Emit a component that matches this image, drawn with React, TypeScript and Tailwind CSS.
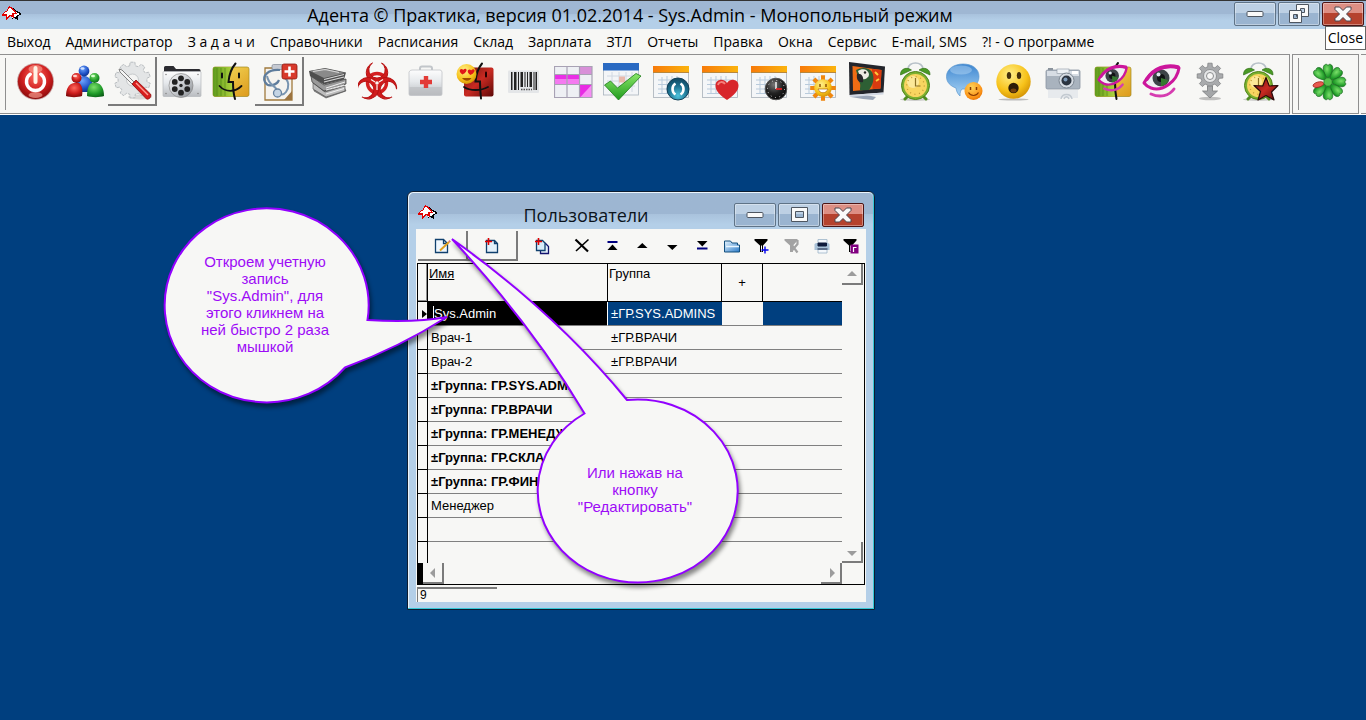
import React from "react";

type IconProps = { children: React.ReactNode };

const Icon = ({ children }: IconProps) => (
  <svg width="40" height="40" viewBox="0 0 40 40" fill="none" aria-hidden="true" className="shrink-0">
    {children}
  </svg>
);

const Defs = () => (
  <svg width="0" height="0" className="absolute" aria-hidden="true">
    <defs>
      <radialGradient id="red" cx=".5" cy=".35" r=".7">
        <stop offset="0" stopColor="#ff6a5e" />
        <stop offset=".55" stopColor="#cf1f1f" />
        <stop offset="1" stopColor="#7d0808" />
      </radialGradient>
      <radialGradient id="blue" cx=".4" cy=".3" r=".8">
        <stop offset="0" stopColor="#6fa5ff" />
        <stop offset=".6" stopColor="#1d4fc4" />
        <stop offset="1" stopColor="#0a2878" />
      </radialGradient>
      <radialGradient id="green" cx=".4" cy=".3" r=".8">
        <stop offset="0" stopColor="#7be06a" />
        <stop offset=".6" stopColor="#1f9a28" />
        <stop offset="1" stopColor="#0a5a14" />
      </radialGradient>
      <radialGradient id="yellow" cx=".4" cy=".3" r=".8">
        <stop offset="0" stopColor="#fff08a" />
        <stop offset=".6" stopColor="#f7c21a" />
        <stop offset="1" stopColor="#c98600" />
      </radialGradient>
      <radialGradient id="orange" cx=".4" cy=".3" r=".8">
        <stop offset="0" stopColor="#ffd35a" />
        <stop offset=".7" stopColor="#fb9216" />
        <stop offset="1" stopColor="#e06a00" />
      </radialGradient>
      <radialGradient id="dark" cx=".4" cy=".3" r=".8">
        <stop offset="0" stopColor="#777" />
        <stop offset=".5" stopColor="#222" />
        <stop offset="1" stopColor="#000" />
      </radialGradient>
      <radialGradient id="teal" cx=".5" cy=".8" r=".9">
        <stop offset="0" stopColor="#4fc3dc" />
        <stop offset=".5" stopColor="#1b6f8e" />
        <stop offset="1" stopColor="#0e3a52" />
      </radialGradient>
      <linearGradient id="silver" x1="0" y1="0" x2="1" y2="1">
        <stop offset="0" stopColor="#fafafa" />
        <stop offset=".5" stopColor="#c9ccd0" />
        <stop offset="1" stopColor="#85898e" />
      </linearGradient>
      <linearGradient id="case" x1="0" y1="0" x2="0" y2="1">
        <stop offset="0" stopColor="#fdfdfd" />
        <stop offset=".45" stopColor="#e6e9ec" />
        <stop offset="1" stopColor="#b9bcc0" />
      </linearGradient>
      <linearGradient id="lime" x1="0" y1="0" x2="1" y2="0">
        <stop offset="0" stopColor="#5f9a1c" />
        <stop offset="1" stopColor="#b4d840" />
      </linearGradient>
      <linearGradient id="gold" x1="0" y1="0" x2="1" y2="1">
        <stop offset="0" stopColor="#f6e060" />
        <stop offset="1" stopColor="#dd9a1c" />
      </linearGradient>
      <linearGradient id="maroon" x1="0" y1="0" x2="1" y2="1">
        <stop offset="0" stopColor="#6a1410" />
        <stop offset=".5" stopColor="#c92a22" />
        <stop offset="1" stopColor="#5c0806" />
      </linearGradient>
      <linearGradient id="header" x1="0" y1="0" x2="1" y2="0">
        <stop offset="0" stopColor="#f77a0a" />
        <stop offset="1" stopColor="#fbb40e" />
      </linearGradient>
      <linearGradient id="check" x1="0" y1="0" x2="0" y2="1">
        <stop offset="0" stopColor="#8be86a" />
        <stop offset="1" stopColor="#1f9a1c" />
      </linearGradient>
      <linearGradient id="bubble" x1="0" y1="0" x2="0" y2="1">
        <stop offset="0" stopColor="#3d86d0" />
        <stop offset="1" stopColor="#a9d4f5" />
      </linearGradient>
      <linearGradient id="folder" x1="0" y1="0" x2="1" y2="1">
        <stop offset="0" stopColor="#e8f6ff" />
        <stop offset="1" stopColor="#2a7ac8" />
      </linearGradient>
    </defs>
  </svg>
);

const gearPoints = (cx: number, cy: number, outer: number, inner: number, teeth: number) => {
  const out: string[] = [];
  for (let i = 0; i < teeth; i++) {
    const a = (i / teeth) * Math.PI * 2 - Math.PI / 2;
    const s = Math.PI / teeth;
    [
      [a - s * 0.62, inner],
      [a - s * 0.42, outer],
      [a + s * 0.42, outer],
      [a + s * 0.62, inner],
    ].forEach(([t, r]) => out.push(`${(cx + Math.cos(t) * r).toFixed(1)},${(cy + Math.sin(t) * r).toFixed(1)}`));
  }
  return out.join(" ");
};

const PowerIcon = () => (
  <Icon>
    <circle cx="20.5" cy="20.5" r="18.5" fill="#c9a0a0" />
    <circle cx="20.5" cy="20.5" r="17.6" fill="url(#red)" />
    <ellipse cx="20.5" cy="8" rx="7" ry="4" fill="#ffb0a0" opacity=".55" />
    <ellipse cx="20.5" cy="34" rx="7" ry="3" fill="#ffb0a0" opacity=".6" />
    <path d="M15.3 13.2a9 9 0 1 0 10.4 0" stroke="#fff" strokeWidth="3.4" strokeLinecap="round" />
    <path d="M20.5 7v14" stroke="#fff3e6" strokeWidth="4" strokeLinecap="round" />
  </Icon>
);

const PeopleIcon = () => (
  <Icon>
    <path d="M10 31c0-9 4-16 10-16s10 7 10 16z" fill="url(#blue)" />
    <circle cx="20" cy="10" r="5.4" fill="url(#blue)" />
    <path d="M2 35c0-8 3-12 8-13h5c3 2 4 6 3 13-4 1.5-12 1.5-16 0z" fill="url(#red)" />
    <circle cx="12.5" cy="17" r="5" fill="url(#red)" />
    <path d="M23 35c0-8 2-12 5-13h5c4 1 7 5 7 13-4 1.5-13 1.5-17 0z" fill="url(#green)" />
    <circle cx="30.5" cy="17" r="5" fill="url(#green)" />
    <ellipse cx="18.5" cy="7.5" rx="2" ry="1.3" fill="#cfe0ff" />
    <ellipse cx="11" cy="15" rx="2" ry="1.2" fill="#ffd2cc" />
    <ellipse cx="29" cy="15" rx="2" ry="1.2" fill="#d4ffcc" />
  </Icon>
);

const ToolsIcon = () => (
  <Icon>
    <ellipse cx="27" cy="36" rx="12" ry="2.5" fill="#ccc" opacity=".7" />
    <polygon points={gearPoints(19.5, 19, 18, 14.5, 10)} fill="#e3e5e6" stroke="#b9bdc0" strokeWidth="1" strokeDasharray="3 1" />
    <circle cx="19.5" cy="19" r="6" fill="#f4f4f3" stroke="#c6c9cb" />
    <path d="M6 8l3 1 14 14-2 2L7 11z" fill="#f5f5f5" stroke="#777" strokeWidth=".9" />
    <path d="M19 23l4-4L37.5 33c1.5 2.5-1.5 6-4 5z" fill="#d81d1d" stroke="#8e0c0c" strokeWidth=".8" />
    <path d="M23 22l12 12" stroke="#ff9d94" strokeWidth="1.4" />
  </Icon>
);

const MovieFolderIcon = () => (
  <Icon>
    <path d="M2 6.5q0-1.5 1.5-1.5h8l2.5 3h23q1.5 0 1.5 1.5V14H2z" fill="#2b2b30" />
    <rect x="1" y="10.5" width="38" height="25" rx="1" fill="url(#case)" stroke="#b4b7bb" strokeWidth=".7" />
    <circle cx="19" cy="24.5" r="12" fill="url(#silver)" stroke="#888" strokeWidth=".7" />
    {[0, 1, 2, 3, 4, 5].map((i) => (
      <circle key={i} cx={19 + Math.sin((i * Math.PI) / 3) * 7.2} cy={24.5 - Math.cos((i * Math.PI) / 3) * 7.2} r="2.9" fill="#222" />
    ))}
    <circle cx="19" cy="24.5" r="1.7" fill="#222" />
    <g fill="#888">
      <circle cx="4" cy="13.5" r=".8" />
      <circle cx="36" cy="13.5" r=".8" />
      <circle cx="4" cy="32.5" r=".8" />
      <circle cx="36" cy="32.5" r=".8" />
    </g>
  </Icon>
);

const FaceBase = () => (
  <>
    <rect x="2" y="6" width="36" height="29.5" rx="2" fill="url(#gold)" stroke="#a08a20" strokeWidth=".7" />
    <path d="M4 6h18c-3 5-4 9-4.5 15H22l1 14.5H4q-2 0-2-2V8q0-2 2-2z" fill="url(#lime)" />
    <path d="M6 7v28M10 7v28M14 7v28" stroke="#4f8414" strokeWidth="1" opacity=".6" />
  </>
);

const FaceIcon = () => (
  <Icon>
    <FaceBase />
    <path d="M24.5 2.5C19 9 18 15 17.5 21H22c0 6 .5 12 2 17" stroke="#111" strokeWidth="2" strokeLinecap="round" />
    <path d="M8.5 25c6 6.5 15.5 6.5 22 0" stroke="#111" strokeWidth="1.8" strokeLinecap="round" />
    <path d="M11 12.5v4M28 12.5v4" stroke="#111" strokeWidth="2" strokeLinecap="round" />
  </Icon>
);

const ClipboardIcon = () => (
  <Icon>
    <path d="M5 7h27v32H5z" fill="#f5f3ef" stroke="#a07a3c" strokeWidth="1.3" />
    <path d="M24 39l8-9v9z" fill="#9c7440" />
    <rect x="12" y="3.5" width="11" height="5" rx="1.5" fill="#c6cad2" stroke="#7f8794" strokeWidth=".7" />
    <path d="M20 9C8 8 2 15 5 21s12 3 14-2" stroke="#5e7c9c" strokeWidth="2.2" />
    <path d="M7 15c2 10 8 9 10 14s6 6 9 2 4-12-3-15" stroke="#7894b0" strokeWidth="2" />
    <circle cx="17.5" cy="32" r="4" fill="#c4d4e4" stroke="#6582a0" strokeWidth="1.3" />
    <rect x="22" y="3" width="15" height="15" rx="2" fill="#d83a2c" stroke="#8e1a12" strokeWidth=".8" />
    <path d="M29.5 5.5v10M24.5 10.5h10" stroke="#fff" strokeWidth="2.6" />
  </Icon>
);

const BooksIcon = () => (
  <Icon>
    <path d="M5 30l12 7 20-7-2-4-18 4-12-5z" fill="#8b8b8b" stroke="#555" strokeWidth=".6" />
    <path d="M4 22l12 9 20-6v5l-19 6L4 28z" fill="#bdbdbd" stroke="#444" strokeWidth=".6" />
    <path d="M2 15l13 9 22-6v5l-22 7L3 21z" fill="#9a9a9a" stroke="#333" strokeWidth=".7" />
    <path d="M17 27l19-6M17 29l18-5M17 33l18-5.5" stroke="#f0f0f0" strokeWidth="1" />
    <path d="M0 10L16 7l21 4.5-2 7-20 5L1 15z" fill="#4e4e4e" />
    <path d="M1 10l15-2.5L36 12l-21 5z" fill="#8a8a8a" />
    <path d="M4 10.5l12-2 14 3M15 18.5l20-5M15 21l20-5" stroke="#d8d8d8" strokeWidth="1.2" />
  </Icon>
);

const BiohazardIcon = () => (
  <Icon>
    <circle cx="19" cy="22" r="9.5" stroke="#d42020" strokeWidth="3.4" />
    {[0, 120, 240].map((a) => (
      <path
        key={a}
        d="M14.5 2A10.7 10.7 0 1 0 23.5 2A8.2 8.2 0 1 1 14.5 2z"
        fill="#d01c1c"
        stroke="#b81414"
        strokeWidth="1"
        transform={`rotate(${a} 19 22)`}
      />
    ))}
    <circle cx="19" cy="22" r="4" fill="#d01c1c" />
    <circle cx="19" cy="22" r="1.8" fill="#f7f7f5" />
    <path d="M19 24v5M17 21l-4-2.5M21 21l4-2.5" stroke="#f7f7f5" strokeWidth="1.2" />
  </Icon>
);

const MedkitIcon = () => (
  <Icon>
    <path d="M13 11V7.5q0-2 2-2h8q2 0 2 2V11" stroke="#c2c6ca" strokeWidth="2" />
    <path d="M5 9h28q1.5 0 2 2v22q0 1.5-1.5 1.5h-30Q2 34.5 2 33V11q1-2 3-2z" fill="url(#case)" stroke="#c1c4c8" strokeWidth=".8" />
    <path d="M2.5 26h32v7q0 1-1 1h-30q-1 0-1-1z" fill="#b9bbbe" opacity=".6" />
    <path d="M19 15v12M13 21h12" stroke="#e23a36" strokeWidth="4.4" />
  </Icon>
);

const LoveFaceIcon = () => (
  <Icon>
    <rect x="8" y="6.5" width="29.5" height="29" rx="2" fill="url(#maroon)" />
    <path d="M26 2.5c-5 6-6 12-6.5 18H24c0 6 .5 12 1 17" stroke="#111" strokeWidth="2" strokeLinecap="round" />
    <path d="M8 26c6 4 17 4 24 0" stroke="#111" strokeWidth="1.8" strokeLinecap="round" />
    <path d="M30 11.5v4" stroke="#200" strokeWidth="2" strokeLinecap="round" />
    <circle cx="10.5" cy="13" r="10" fill="url(#yellow)" />
    <path d="M6.5 13.5c-4-2.5-3-5.5-1-5.5 1.5 0 1.5 1 1.5 1s1.5-2 3-1 0 4-3.5 5.5zM14.5 14c-4-2.5-3-5.5-1-5.5 1.5 0 1.5 1 1.5 1s1.5-2 3-1 0 4-3.5 5.5z" fill="#e01818" />
    <path d="M6 17c3 4 8 3 9.5 0z" fill="#a04c00" />
  </Icon>
);

const BarcodeIcon = () => (
  <Icon>
    <rect x="3" y="9.5" width="31" height="22.5" rx="1" fill="#e4e6e8" />
    <path
      d="M6 11h1.5v18H6zM9 11h2.5v18H9zM13 11h1v18h-1zM15.5 11h2.5v15h-2.5zM19.5 11h1v15h-1zM22 11h1v15h-1zM24.5 11h2.5v15h-2.5zM28.5 11h1v18h-1zM30.5 11h1.5v18h-1.5z"
      fill="#222"
    />
    <path d="M16 28.5h11" stroke="#555" strokeWidth="1.5" strokeDasharray="1.5 1" />
  </Icon>
);

const GridIcon = () => (
  <Icon>
    <rect x=".5" y="5" width="37.5" height="31.5" fill="#eef0f4" />
    <rect x="25.5" y="5" width="12.5" height="8.5" fill="#d890d8" />
    <rect x="1" y="14" width="24.5" height="9.5" fill="#ea2fe6" />
    <rect x="1" y="18" width="24.5" height="5" fill="#f47af0" />
    <rect x="25.5" y="23.5" width="12.5" height="13" fill="#e82be4" />
    <path d="M26 36.5l12-13v13z" fill="#f78cf4" />
    <path d="M.5 5.5h37.5v31H.5zM13 5v31.5M25.5 5v31.5M.5 13.5H38M.5 23.5H38" stroke="#a8a2b4" strokeWidth="1.2" />
  </Icon>
);

const CheckCalendarIcon = () => (
  <Icon>
    <rect x=".5" y="3" width="35" height="31" fill="#f3f5f7" stroke="#aab4be" strokeWidth=".8" />
    <rect x="0" y="2" width="36" height="7.5" fill="#2a6ac2" />
    <path d="M4 15h28M4 20h28M4 25h28M9 11v20M16 11v20M23 11v20M29 11v20" stroke="#d0d8e2" strokeWidth="1" />
    <rect x="16" y="15.5" width="6" height="6" fill="#e9b9ac" />
    <path d="M1.5 24l6-4 7 7L33 12.5l5 2.5L15.5 39z" fill="url(#check)" stroke="#1c7a18" strokeWidth=".8" />
  </Icon>
);

const CalendarBase = () => (
  <>
    <rect x="1.5" y="6" width="35" height="30.5" fill="#f4f6f8" stroke="#a9b0b8" strokeWidth=".8" />
    <rect x="1" y="5" width="36" height="7" fill="url(#header)" />
    <path d="M1 11.5h36" stroke="#b8873c" strokeWidth="1" />
    <path d="M6 19h26M6 23.5h26M6 28h26M6 32.5h26M10 16v16.5M15 15v17.5M20 15v17.5M25 15v17.5" stroke="#b9cbdc" strokeWidth="1" />
  </>
);

const SyncCalendarIcon = () => (
  <Icon>
    <CalendarBase />
    <circle cx="26" cy="28" r="11" fill="url(#teal)" stroke="#124058" />
    <path d="M23.5 22.5c-4 2.5-4 8.5 0 11M28.5 22.5c4 2.5 4 8.5 0 11" stroke="#fff" strokeWidth="2.6" />
  </Icon>
);

const HeartCalendarIcon = () => (
  <Icon>
    <CalendarBase />
    <path d="M26 39C19 34 14.5 30 14.5 24.5c0-6 8-8 11.5-2.5 3.5-5.5 11.5-3.5 11.5 2.5C37.5 30 33 34 26 39z" fill="#d8262b" />
    <path d="M17 24c.5-3.5 5-4 7-1" stroke="#f4807c" strokeWidth="1.8" />
  </Icon>
);

const ClockCalendarIcon = () => (
  <Icon>
    <CalendarBase />
    <circle cx="26" cy="28" r="10.8" fill="url(#dark)" stroke="#555" />
    <circle cx="26" cy="28" r="8.5" stroke="#ddd" strokeWidth="1" strokeDasharray="1 3.45" />
    <path d="M26 28v-7" stroke="#fff" strokeWidth="1.4" />
    <path d="M26 28h6" stroke="#e22" strokeWidth="1.6" />
  </Icon>
);

const SunCalendarIcon = () => (
  <Icon>
    <CalendarBase />
    <polygon points={gearPoints(24, 27, 13, 8, 8)} fill="#f0870f" />
    <circle cx="24" cy="27" r="8.8" fill="url(#yellow)" />
    <path d="M21 23v3M27 23v3" stroke="#8a4a00" strokeWidth="1.4" />
    <path d="M19 28c2 5 8 5 10 0z" fill="#fff" stroke="#b06a00" strokeWidth=".7" />
  </Icon>
);

const TvIcon = () => (
  <Icon>
    <path d="M3 33l15 1 10 2-3 3-10-1-12-2z" fill="#9aa5b6" />
    <path d="M1 1l36 4.5-1.5 26L1.5 34z" fill="#23252b" />
    <path d="M4.5 5l29 4-1 18.5L5 30z" fill="#ef6c14" />
    <path d="M24 8l9.5 1-1 18.5-8 .5z" fill="#d93a10" />
    <path d="M8 9c5-3 13-3 16 2 3 6 1 13-3 18l-9 .5c0-4 1-6-1-9z" fill="#2d5f34" />
    <path d="M10 10c4-3 10-2 11 3 0 4-4 6-8 5z" fill="#ecebe4" />
    <path d="M9 13c4-1 7 2 6 8-4 1-7-2-6-8z" fill="#26262a" />
    <circle cx="17" cy="11.5" r="1.2" fill="#222" />
    <path d="M27 11l3 3M28 20l3-2" stroke="#ffc93a" strokeWidth="2" />
    <path d="M1.5 34l34-2.5v2L2 36z" fill="#d3d9e4" />
  </Icon>
);

const AlarmBase = () => (
  <>
    <ellipse cx="18" cy="38.5" rx="15" ry="1.5" fill="#bbb" opacity=".7" />
    <path d="M11 8C11 0 26 0 26 8" stroke="#b7c0c8" strokeWidth="1.6" />
    <path d="M3.5 14C3 7.5 10 5.5 14.5 9zM33 14c.5-6.5-6.5-8.5-11-5z" fill="#4a9a26" stroke="#2c6a12" strokeWidth=".6" />
    <path d="M10 36l-2 2M27 36l2 2" stroke="#4f8c20" strokeWidth="3" strokeLinecap="round" />
    <circle cx="18.5" cy="24.5" r="14" fill="#7cb030" stroke="#4f8418" strokeWidth="1" />
    <circle cx="18.5" cy="24.5" r="11.5" fill="#f8d560" />
    <circle cx="16" cy="21" r="6" fill="#fdf0b0" opacity=".7" />
    <circle cx="18.5" cy="24.5" r="8.8" stroke="#c09a34" strokeWidth="1.3" strokeDasharray="1 3.6" />
    <path d="M18.5 17v8h5" stroke="#8a7024" strokeWidth="1.2" />
  </>
);

const AlarmIcon = () => (
  <Icon>
    <AlarmBase />
  </Icon>
);

const ChatIcon = () => (
  <Icon>
    <path d="M17 3C8 3 .5 8 .5 15.5c0 6 4 9.5 9.5 11.5.5 3 1 5 4 8 0-4 .5-5 2-7 10 1 17-4.5 17-12.5S26 3 17 3z" fill="url(#bubble)" stroke="#5a97cf" strokeWidth=".7" />
    <ellipse cx="15" cy="9" rx="11" ry="4.5" fill="#d8efff" opacity=".35" />
    <circle cx="27.5" cy="30" r="9" fill="url(#orange)" />
    <path d="M24.5 26v3M30.5 26v3" stroke="#8a3a00" strokeWidth="1.5" />
    <path d="M22.5 31.5c2.5 4 7.5 4 10 0" stroke="#8a3a00" strokeWidth="1.2" />
  </Icon>
);

const SurprisedIcon = () => (
  <Icon>
    <ellipse cx="18.5" cy="38.5" rx="15" ry="1" fill="#bbb" />
    <circle cx="18.5" cy="20.5" r="17.2" fill="url(#yellow)" />
    <ellipse cx="14" cy="14.5" rx="2.2" ry="3.6" fill="#43300c" />
    <ellipse cx="24" cy="14.5" rx="2.2" ry="3.6" fill="#43300c" />
    <circle cx="18.5" cy="27" r="5.2" fill="#2c1c08" />
    <ellipse cx="18.5" cy="29.5" rx="3" ry="2" fill="#75420e" />
  </Icon>
);

const CameraIcon = () => (
  <Icon>
    <path d="M4 29h30v8H4z" fill="#dfe4e9" opacity=".7" />
    <path d="M17 38c1-6 10-6 11 0M20 38c1-3 4-3 5 0" stroke="#c3cad1" strokeWidth="1.5" />
    <rect x="4" y="7" width="5" height="3" fill="#8b939c" />
    <rect x="2" y="9" width="34" height="19" rx="1.5" fill="#a9b3be" stroke="#8c96a1" strokeWidth=".8" />
    <path d="M3 10h32v5H3z" fill="#d7dde4" />
    <rect x="13" y="8" width="12" height="4.5" fill="#edf1f5" stroke="#8c96a1" strokeWidth=".6" />
    <rect x="28" y="10" width="6" height="3" fill="#fff" />
    <circle cx="22.5" cy="19.5" r="7.5" fill="#d5dbe2" stroke="#7d8792" />
    <circle cx="22.5" cy="19.5" r="5" fill="#2b3440" />
    <circle cx="21.5" cy="18.5" r="2" fill="#7d9ab8" />
  </Icon>
);

const EyeShape = () => (
  <>
    <path d="M2 21C8 10 22 2 37 6 35 20 20 30 9 26c-3-1-5-2.5-7-5z" fill="#eef0f2" />
    <circle cx="19" cy="16" r="8.5" fill="#3d4448" />
    <circle cx="19" cy="16" r="4" fill="#101214" />
    <path d="M19 16l7 2c-1 4-4 6-7 6z" fill="#357a30" />
    <circle cx="16.5" cy="12.5" r="2" fill="#dfe8f0" />
    <path d="M2 21C8 9 22 2 37 6 35 20 20 30 9 26c-3-1-5-2.5-7-5z" stroke="#cc169c" strokeWidth="3" strokeLinejoin="round" />
    <path d="M5 17C12 6 24 2 36 5" stroke="#cc169c" strokeWidth="3.6" strokeLinecap="round" />
    <path d="M9 32c9 4 18 2 23-5" stroke="#d63cb0" strokeWidth="3" strokeLinecap="round" />
  </>
);

const EyeFaceIcon = () => (
  <Icon>
    <FaceBase />
    <path d="M25 2c-5 6-6 12-6.5 18H22c0 7 .5 13 1.5 18" stroke="#111" strokeWidth="2" strokeLinecap="round" />
    <g transform="translate(4 2) scale(.8)">
      <EyeShape />
    </g>
  </Icon>
);

const EyeIcon = () => (
  <Icon>
    <g transform="translate(0 1)">
      <EyeShape />
    </g>
  </Icon>
);

const GearArrowIcon = () => (
  <Icon>
    <ellipse cx="19" cy="37.5" rx="11" ry="1.8" fill="#999" opacity=".6" />
    <polygon points={gearPoints(19, 15, 13, 9.5, 8)} fill="#a9abad" stroke="#808284" strokeWidth=".8" />
    <circle cx="19" cy="15" r="6.5" fill="#e6e7e8" stroke="#909294" />
    <circle cx="19" cy="15" r="3.5" fill="#f7f7f6" stroke="#8a8c8e" />
    <path d="M16.5 25h5v5h5L19 37l-7.5-7h5z" fill="#a4a6a8" stroke="#7b7d7f" strokeWidth=".8" />
  </Icon>
);

const StarAlarmIcon = () => (
  <Icon>
    <AlarmBase />
    <path d="M26 16.5l3.3 8.5 8.7-.5-6.5 6.5 2.5 8-8-4.5-8 4.5 2.5-8.5-6.5-6 8.7.5z" fill="url(#maroon)" stroke="#2a0a0a" strokeWidth="1.2" strokeLinejoin="round" />
  </Icon>
);

const FlowerIcon = () => (
  <Icon>
    {[0, 45, 90, 135, 180, 225, 315].map((a) => (
      <path
        key={a}
        d="M20 18C16 12 14.5 8 15.5 4.500 16.500 2 19 1.500 20 3.500 21 1.500 23.500 2 24.500 4.500 25.500 8 24 12 20 18z"
        fill="url(#green)"
        stroke="#17681c"
        strokeWidth=".7"
        transform={`rotate(${a} 20 20)`}
      />
    ))}
    <ellipse cx="20" cy="10" rx="2.6" ry="5.5" fill="#e85a50" stroke="#9a1f18" strokeWidth=".7" transform="rotate(255 20 20)" />
    <circle cx="20" cy="20" r="4.2" fill="#57c24c" stroke="#1c7420" strokeWidth=".7" />
  </Icon>
);

const LogoIcon = () => (
  <svg width="20" height="15" viewBox="0 0 20 15" fill="none" aria-hidden="true" className="shrink-0" shapeRendering="crispEdges">
    <path d="M11 2l3 3 5 3-4 2v3l-3-2-2 2" fill="#fff" stroke="#000" strokeWidth="1.2" />
    <path d="M5 5l2-4 3 1 4 5-3 1v3l-3-2-3 4-1-4-4 0 3-3z" fill="#fff" stroke="#e00000" strokeWidth="1.3" />
  </svg>
);

const topTools: { name: string; icon: React.ReactNode; raised?: boolean }[] = [
  { name: "Выход", icon: <PowerIcon /> },
  { name: "Пользователи", icon: <PeopleIcon /> },
  { name: "Настройки", icon: <ToolsIcon />, raised: true },
  { name: "Медиа", icon: <MovieFolderIcon /> },
  { name: "Пациенты", icon: <FaceIcon /> },
  { name: "Карта", icon: <ClipboardIcon />, raised: true },
  { name: "Справочники", icon: <BooksIcon /> },
  { name: "Диагнозы", icon: <BiohazardIcon /> },
  { name: "Аптечка", icon: <MedkitIcon /> },
  { name: "Лояльность", icon: <LoveFaceIcon /> },
  { name: "Штрих-код", icon: <BarcodeIcon /> },
  { name: "Расписание", icon: <GridIcon /> },
  { name: "Задачи", icon: <CheckCalendarIcon /> },
  { name: "Обновить", icon: <SyncCalendarIcon /> },
  { name: "Избранное", icon: <HeartCalendarIcon /> },
  { name: "Время", icon: <ClockCalendarIcon /> },
  { name: "Выходные", icon: <SunCalendarIcon /> },
  { name: "Экран", icon: <TvIcon /> },
  { name: "Будильник", icon: <AlarmIcon /> },
  { name: "Сообщения", icon: <ChatIcon /> },
  { name: "Жалобы", icon: <SurprisedIcon /> },
  { name: "Снимки", icon: <CameraIcon /> },
  { name: "Просмотр пациента", icon: <EyeFaceIcon /> },
  { name: "Просмотр", icon: <EyeIcon /> },
  { name: "Сервис", icon: <GearArrowIcon /> },
  { name: "Напоминания", icon: <StarAlarmIcon /> },
];

const menu = [
  "Выход",
  "Администратор",
  "З а д а ч и",
  "Справочники",
  "Расписания",
  "Склад",
  "Зарплата",
  "ЗТЛ",
  "Отчеты",
  "Правка",
  "Окна",
  "Сервис",
  "E-mail, SMS",
  "?! - О программе",
];

const captionBase = "flex h-6 w-[42px] items-center justify-center rounded-[2px] border shadow-[inset_0_0_0_1px_rgba(255,255,255,0.35)]";
const captionPlain = "border-[#5f7387] bg-linear-to-b from-[#bdd0e4] from-45% to-[#9ab4d0] to-45%";
const captionClose = "border-[#4c1414] bg-linear-to-b from-[#dd8f84] from-45% to-[#b5422e] to-45%";

const CaptionButtons = ({ restored }: { restored?: boolean }) => (
  <div className="flex gap-0.5">
    <button aria-label="Свернуть" className={`${captionBase} ${captionPlain}`}>
      <svg width="18" height="8" viewBox="0 0 18 8" aria-hidden="true">
        <rect x="1" y="1.5" width="16" height="5" rx="1" fill="#fafafa" stroke="#4e5661" />
      </svg>
    </button>
    <button aria-label="Развернуть" className={`${captionBase} ${captionPlain}`}>
      {restored ? (
        <svg width="22" height="20" viewBox="0 0 22 20" fillRule="evenodd" aria-hidden="true">
          <path d="M8.5 .5h12v12h-12zM12.5 4.5v4h4v-4z" fill="#fafafa" stroke="#4e5661" />
          <path d="M1.5 6.5h12v12h-12zM5.5 10.5v4h4v-4z" fill="#fafafa" stroke="#4e5661" />
        </svg>
      ) : (
        <svg width="17" height="16" viewBox="0 0 17 16" fillRule="evenodd" aria-hidden="true">
          <path d="M.5 .5h16v14H.5zM4.5 4.5v6h8v-6z" fill="#fafafa" stroke="#4e5661" />
        </svg>
      )}
    </button>
    <button aria-label="Закрыть" className={`${captionBase} ${captionClose}`}>
      <svg width="18" height="16" viewBox="0 0 18 16" aria-hidden="true">
        <path d="M1 1h4.5L9 4.5 12.5 1H17v2.5L12.5 8l4.5 4.5V15h-4.5L9 11.5 5.5 15H1v-2.5L5.5 8 1 3.5z" fill="#fafafa" stroke="#4a4650" />
      </svg>
    </button>
  </div>
);

const Small = ({ children }: { children: React.ReactNode }) => (
  <svg width="18" height="18" viewBox="0 0 18 18" fill="none" aria-hidden="true" className="shrink-0">
    {children}
  </svg>
);

const Funnel = ({ color }: { color: string }) => <path d="M1.5 2h13v1.5L10 8.5V15H7V8.5L1.5 3.5z" fill={color} />;

const gridTools: { name: string; icon: React.ReactNode; wide?: boolean; raised?: boolean }[] = [
  {
    name: "Редактировать",
    wide: true,
    raised: true,
    icon: (
      <Small>
        <path d="M2.5 2.5h8l4 4v9h-12zM10.5 2.5v4h4" fill="#f0f8ff" stroke="#10406e" strokeWidth="1.3" />
        <path d="M7 13.5L16 5" stroke="#e0a020" strokeWidth="2" />
        <path d="M16 5l1.2-1.2" stroke="#d87878" strokeWidth="2" />
      </Small>
    ),
  },
  {
    name: "Добавить",
    wide: true,
    raised: true,
    icon: (
      <Small>
        <path d="M3.5 3.5h8l3 3v9h-11zM11.5 3.5v3h3" fill="#e4f1fb" stroke="#10406e" strokeWidth="1.3" />
        <path d="M5.5 1v7M2 4.5h7" stroke="#e00000" strokeWidth="1.6" />
      </Small>
    ),
  },
  {
    name: "Копировать",
    wide: true,
    icon: (
      <Small>
        <path d="M7.5 6.5h5l3 3v7h-8z" fill="#e4f1fb" stroke="#12126e" strokeWidth="1.3" />
        <path d="M3.5 3.5h6l2.5 2.5v7.5h-8.5z" fill="#d8ecfa" stroke="#10406e" strokeWidth="1.3" />
        <path d="M5.5 1v7M2 4.5h7" stroke="#e00000" strokeWidth="1.6" />
      </Small>
    ),
  },
  {
    name: "Удалить",
    icon: (
      <Small>
        <path d="M2.5 2.5l12.5 12" stroke="#000" strokeWidth="2.2" />
        <path d="M15.5 2.5L3 14" stroke="#000" strokeWidth="1.6" />
      </Small>
    ),
  },
  {
    name: "Первая запись",
    icon: (
      <Small>
        <path d="M4.5 5h10" stroke="#000080" strokeWidth="2" />
        <path d="M4.5 13h10l-5-5.5z" fill="#000" />
      </Small>
    ),
  },
  {
    name: "Предыдущая запись",
    icon: (
      <Small>
        <path d="M4 11h10.5L9.3 6z" fill="#000" />
      </Small>
    ),
  },
  {
    name: "Следующая запись",
    icon: (
      <Small>
        <path d="M4 8h10.5l-5.2 5z" fill="#000" />
      </Small>
    ),
  },
  {
    name: "Последняя запись",
    icon: (
      <Small>
        <path d="M4 4h10.5l-5.2 5.5z" fill="#000" />
        <path d="M4 11.5h10.5" stroke="#000080" strokeWidth="2" />
      </Small>
    ),
  },
  {
    name: "Открыть",
    icon: (
      <Small>
        <path d="M1.5 4h6l1.5 2h5.5v2h2v7h-15z" fill="url(#folder)" stroke="#14507e" />
        <path d="M3 9.5h13" stroke="#e8f6ff" strokeWidth="1.5" />
      </Small>
    ),
  },
  {
    name: "Фильтр",
    icon: (
      <Small>
        <Funnel color="#000" />
        <path d="M8.5 8.5v6" stroke="#fff" />
        <path d="M12 9.5v7M8.5 13h7" stroke="#0000ee" strokeWidth="1.4" />
      </Small>
    ),
  },
  {
    name: "Снять фильтр",
    icon: (
      <Small>
        <Funnel color="#a3a3a3" />
        <path d="M8 7l6.5 8.5M14.5 3v4l-5 6" stroke="#a3a3a3" strokeWidth="2.2" />
      </Small>
    ),
  },
  {
    name: "Печать",
    icon: (
      <Small>
        <path d="M5 2.5h9v4H5zM5 12h9v4H5z" fill="#f4f8fc" stroke="#9cb4c8" strokeWidth=".8" />
        <path d="M1.5 7.5q0-1.5 2-1.5h11q2 0 2 1.5V13h-15z" fill="#a9c2d8" />
        <path d="M5 6h8.5v3H5zM4.5 12h10" fill="#101c3c" stroke="#101c3c" />
      </Small>
    ),
  },
  {
    name: "Сброс",
    icon: (
      <Small>
        <Funnel color="#000" />
        <path d="M8.5 8.5v6" stroke="#fff" />
        <path d="M8.5 7.5h8v9h-8z" fill="#800080" />
        <path d="M11.5 15V10.5h3" stroke="#fff" strokeWidth="1.2" />
      </Small>
    ),
  },
];

const rows: { name: string; group?: string; bold?: boolean }[] = [
  { name: "Врач-1", group: "±ГР.ВРАЧИ" },
  { name: "Врач-2", group: "±ГР.ВРАЧИ" },
  { name: "±Группа: ГР.SYS.ADMINS", bold: true },
  { name: "±Группа: ГР.ВРАЧИ", bold: true },
  { name: "±Группа: ГР.МЕНЕДЖЕРЫ", bold: true },
  { name: "±Группа: ГР.СКЛАД", bold: true },
  { name: "±Группа: ГР.ФИНАНСЫ", bold: true },
  { name: "Менеджер" },
  { name: "" },
];

const Arrow = ({ d }: { d: string }) => (
  <svg width="10" height="10" viewBox="0 0 10 10" aria-hidden="true">
    <path d={d} fill="#9c9c9c" />
  </svg>
);

const scrollButton = "flex h-[21px] w-[21px] items-center justify-center border-r-2 border-b-2 border-[#7b7b7b]";

const UsersGrid = () => (
  <div className="mx-px flex border border-black text-[13px] leading-4 text-black">
    <div className="min-w-0 flex-1">
      <table className="w-full table-fixed border-separate border-spacing-0 text-left">
        <colgroup>
          <col className="w-[10px]" />
          <col className="w-[180px]" />
          <col className="w-[114px]" />
          <col className="w-[41px]" />
          <col />
        </colgroup>
        <thead>
          <tr className="h-[38px] align-top">
            <td className="border-r border-b border-black p-0 shadow-[inset_-1px_-1px_0_#8c8c8c]" />
            <th className="border-r border-b border-black px-px pt-0.5 font-normal underline">Имя</th>
            <th className="border-r border-b border-black px-px pt-0.5 font-normal">Группа</th>
            <th className="border-r border-b border-black p-0 text-center align-middle font-normal">+</th>
            <td className="border-b border-black p-0" />
          </tr>
        </thead>
        <tbody>
          <tr className="h-6">
            <td className="border-r border-b border-black p-0">
              <svg width="6" height="8" viewBox="0 0 6 8" className="ml-auto" aria-hidden="true">
                <path d="M1 0l5 4-5 4z" />
              </svg>
            </td>
            <td className="border-r border-b border-r-white border-b-[#808080] bg-black py-0 pr-0 pl-[5px] text-white">
              <span className="border-l border-white">Sys.Admin</span>
            </td>
            <td className="border-b border-[#808080] bg-[#003f7f] py-0 pr-0 pl-[3px] whitespace-nowrap text-white">±ГР.SYS.ADMINS</td>
            <td className="border-b border-[#808080] p-0" />
            <td className="border-b border-[#808080] bg-[#003f7f] p-0" />
          </tr>
          {rows.map((row, i) => (
            <tr key={i} className="h-6">
              <td className="border-r border-b border-black p-0" />
              <td className={`border-b border-[#808080] py-0 pr-0 pl-[3px] whitespace-nowrap ${row.bold ? "font-bold" : ""}`}>{row.name}</td>
              <td className="border-b border-[#808080] py-0 pr-0 pl-[3px] whitespace-nowrap">{row.group}</td>
              <td className="border-b border-[#808080] p-0" />
              <td className="border-b border-[#808080] p-0" />
            </tr>
          ))}
          <tr className="h-[21px]">
            <td className="border-r border-black p-0" />
            <td colSpan={4} className="p-0" />
          </tr>
        </tbody>
      </table>
      <div className="flex h-[21px] items-stretch">
        <span className="w-[5px] bg-black" />
        <button aria-label="Влево" className={scrollButton}>
          <Arrow d="M7 0v10L2 5z" />
        </button>
        <button aria-label="Вправо" className={`${scrollButton} ml-auto`}>
          <Arrow d="M4 0v10l5-5z" />
        </button>
      </div>
    </div>
    <div className="flex w-[22px] flex-col justify-between pb-[21px]">
      <button aria-label="Вверх" className={scrollButton}>
        <Arrow d="M0 7h10L5 2z" />
      </button>
      <button aria-label="Вниз" className={scrollButton}>
        <Arrow d="M0 4h10L5 9z" />
      </button>
    </div>
  </div>
);

const UsersWindow = () => (
  <section className="absolute top-[76px] left-[407px] w-[468px] rounded-t-md border border-[#0c1c30] bg-[#b4cfe8] shadow-[inset_-1px_-1px_0_#35c8d8,inset_1px_1px_0_#eaf4fc]">
    <header className="m-px flex h-[35px] items-center rounded-t-[5px] bg-linear-to-b from-[#9db6d2] from-60% via-[#a9c2dc] via-60% to-[#b4cfe8] to-90% pr-[9px] pl-[9px]">
      <div className="pt-1">
        <LogoIcon />
      </div>
      <h2 className="flex-1 pt-2 text-center text-[18px] leading-6 text-[#0c141c]">Пользователи</h2>
      <div className="pt-2">
        <CaptionButtons />
      </div>
    </header>
    <div className="mr-2 mb-[7px] ml-2 bg-[#f7f7f5] font-['Liberation_Sans',Arial,sans-serif]">
      <div className="flex h-[34px] pt-0.5 pl-0.5">
        {gridTools.map((tool) => (
          <button
            key={tool.name}
            aria-label={tool.name}
            className={`flex h-[30px] items-center justify-center pt-0.5 ${tool.wide ? "w-[50px]" : "w-[30px] last:w-7"} shrink-0 border-r-2 border-b-2 ${tool.raised ? "border-[#7b7b7b]" : "border-transparent"}`}
          >
            {tool.icon}
          </button>
        ))}
      </div>
      <UsersGrid />
      <div className="mx-px mt-0.5 h-[15px] w-20 border-t-2 border-l border-[#7b7b7b] pl-0.5 text-[12px] leading-[13px] text-black">9</div>
    </div>
  </section>
);

const Callouts = () => (
  <div className="pointer-events-none absolute inset-0 overflow-hidden font-['Liberation_Sans',Arial,sans-serif] text-[15px] leading-[17px] text-[#9d0bf7]">
    <svg className="absolute inset-0 h-full w-full" aria-hidden="true">
      <g fill="#f7f7f5" stroke="#9200ff" strokeWidth="2" strokeLinejoin="miter" className="drop-shadow-[2px_4px_2px_rgba(0,0,0,0.45)]">
        <path d="M367.5 205Q415 208 447 202Q400 232 345 252.5A102 97 0 1 1 367.5 205z" />
        <path d="M452 124Q532 210 584.5 298.5A100 91.5 0 1 0 627 285Q556 198 452 124z" />
      </g>
    </svg>
    <p className="absolute top-[138px] left-[195px] w-[140px] text-center">
      Откроем учетную
      <br />
      запись
      <br />
      "Sys.Admin", для
      <br />
      этого кликнем на
      <br />
      ней быстро 2 раза
      <br />
      мышкой
    </p>
    <p className="absolute top-[349px] left-[565px] w-[140px] text-center">
      Или нажав на
      <br />
      кнопку
      <br />
      "Редактировать"
    </p>
  </div>
);

export default function App() {
  return (
    <div className="flex min-h-screen flex-col bg-[#003f7f] font-['Open_Sans','Noto_Sans',sans-serif] text-black">
      <Defs />
      <header className="flex h-[29px] items-start border-t border-[#333] bg-linear-to-b from-[#9fb7d3] from-45% via-[#a8c1dc] via-45% to-[#b4cfe8] to-70% pr-0.5 pl-0.5">
        <div className="pt-[5px]">
          <LogoIcon />
        </div>
        <h1 className="ml-1 flex-1 text-center text-[18px] leading-[29px]">Адента © Практика, версия 01.02.2014 - Sys.Admin - Монопольный режим</h1>
        <div className="relative pt-px">
          <CaptionButtons restored />
          <div role="tooltip" className="absolute top-[25px] -right-0.5 z-10 h-6 border border-[#666] bg-white px-0.5 text-[14px] leading-[22px]">
            Close
          </div>
        </div>
      </header>
      <nav className="flex h-[25px] gap-px bg-[#f7f7f5] text-[14px] leading-[25px]">
        {menu.map((item) => (
          <button key={item} className="px-[7px] whitespace-nowrap">
            {item}
          </button>
        ))}
      </nav>
      <div className="flex h-[61px] gap-0.5 border-b border-white bg-[#f7f7f5]">
        <div className="flex w-[1290px] border-t border-r border-b border-[#8f8f8f] py-0.5">
          <span className="my-px mr-1 ml-1 w-0.5 border-r border-[#8f8f8f]" />
          {topTools.map((tool) => (
            <button
              key={tool.name}
              aria-label={tool.name}
              className={`flex h-[49px] w-[49px] shrink-0 items-center justify-center border-r-2 border-b-2 pl-0.5 ${tool.raised ? "border-[#7b7b7b]" : "border-transparent"}`}
            >
              {tool.icon}
            </button>
          ))}
        </div>
        <div className="flex w-[67px] border border-[#8f8f8f] py-0.5">
          <span className="my-px mr-1 ml-1 w-0.5 border-r border-[#8f8f8f]" />
          <button aria-label="Цветок" className="flex h-[49px] w-[49px] items-center justify-center">
            <FlowerIcon />
          </button>
        </div>
        <div className="flex-1 border-y border-[#8f8f8f]" />
      </div>
      <main className="relative flex-1">
        <UsersWindow />
        <Callouts />
      </main>
    </div>
  );
}
